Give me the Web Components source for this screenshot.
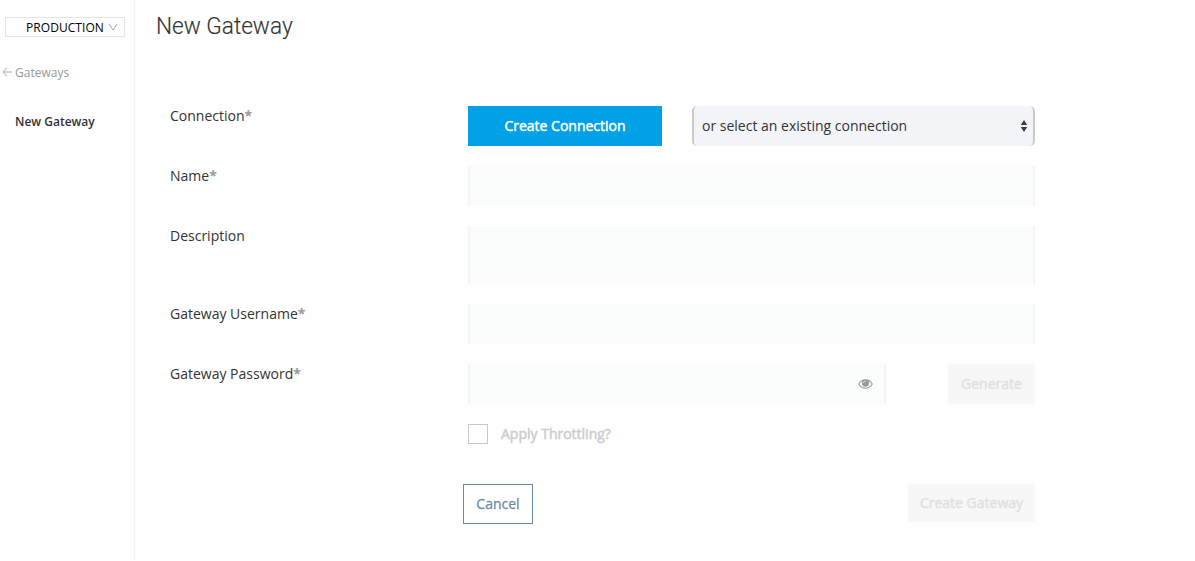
<!DOCTYPE html>
<html lang="en">
<head>
<meta charset="utf-8">
<title>New Gateway</title>
<style>
html,body{margin:0;height:100%;background:#fefefe;overflow:hidden}
body{font:14px/20px "Open Sans","Noto Sans",sans-serif;color:#333}
</style>
</head>
<body>
<gateway-app></gateway-app>
<script>
const define = (name, html) => customElements.define(name, class extends HTMLElement {
  constructor() {
    super();
    const t = document.createElement('template');
    t.innerHTML = html;
    this.attachShadow({mode: 'open'}).appendChild(t.content.cloneNode(true));
  }
});

define('env-picker', `
<style>
:host{display:flex;box-sizing:border-box;height:20px;width:120px;margin:17px 0 0 5px;border:1px solid #e4e4e4;padding-left:20px;align-items:center;color:#000;font-size:12px;line-height:18px}
span{width:79px;white-space:nowrap;letter-spacing:.06px;position:relative;top:1px}
svg{display:block;margin-left:3px}
</style>
<span><slot></slot></span>
<svg width="10" height="8" viewBox="0 0 10 8" fill="none" stroke="#a3a3a3"><path d="M.8.8 5 7 9.2.8"/></svg>`);

define('back-link', `
<style>
:host{display:flex;height:18px;margin:27px 0 0 2px;font-size:12px;line-height:18px;color:#999}
svg{display:block;margin:3px 3px 0 0}
</style>
<svg width="10" height="10" viewBox="0 0 10 10" fill="none" stroke="#c9c9c9" stroke-width="1.3"><path d="M10 5H1M4.8 1 1 5l3.8 4"/></svg>
<slot></slot>`);

define('side-nav', `
<style>
:host{display:flex;flex-direction:column;box-sizing:border-box;width:135px;height:560px;flex:none;border-right:1px solid #f1f1f1}
b{font-size:12px;font-weight:600;line-height:18px;margin:31px 0 0 15px;white-space:nowrap}
</style>
<env-picker>PRODUCTION</env-picker>
<back-link>Gateways</back-link>
<b>New Gateway</b>`);

define('form-row', `
<style>
:host{display:flex;align-items:flex-start;margin-bottom:20px;width:865px}
label{width:298px;flex:none;white-space:nowrap}
i{display:none;font-style:normal;font-weight:700;color:#999}
:host([required]) i{display:inline}
div{display:flex;flex:1;justify-content:space-between}
</style>
<label><slot name="label"></slot><i>*</i></label><div><slot></slot></div>`);

define('text-field', `
<style>
:host{display:flex;box-sizing:border-box;width:567px;height:40px;border:solid #f3f4f4;border-width:0 2px;background:#fbfdfc;align-items:center;justify-content:flex-end}
:host([tall]){height:58px}
:host([short]){width:418px;padding-right:11px}
</style><slot></slot>`);

define('eye-icon', `
<style>:host{display:block}svg{display:block}</style>
<svg width="15" height="10" viewBox="0 0 15 10"><path d="M.7 5C4-.6 11-.6 14.3 5 11 10.6 4 10.6.7 5Z" fill="none" stroke="#999" stroke-width="1.1"/><circle cx="7.5" cy="4.2" r="3.6" fill="#999"/><path d="M5.4 4.2Q5.5 2.1 7.6 2" fill="none" stroke="#eee" stroke-width=".8"/></svg>`);

define('push-button', `
<style>
:host{display:flex;box-sizing:border-box;height:40px;align-items:center;justify-content:center;-webkit-text-stroke:.45px currentColor;white-space:nowrap}
:host([kind=primary]){width:194px;background:#00a1e7;color:#fff}
:host([kind=generate]){width:87px;background:#f7f7f7;color:#dfe1e1}
:host([kind=submit]){width:127px;height:38px;background:#f7f7f7;color:#dfe1e1}
:host([kind=outline]){width:70px;border:1px solid #6a8a9d;color:#6f8da0;-webkit-text-stroke-width:.3px}
</style><span><slot></slot></span>`);

define('select-box', `
<style>
:host{display:flex;box-sizing:border-box;width:343px;height:40px;border:solid #c8cacb;border-width:0 2px;border-radius:5px;background:#f3f4f7;align-items:center;justify-content:space-between;padding:0 5px 0 8px}
svg{display:block}
</style><span><slot></slot></span>
<svg width="8" height="12" viewBox="0 0 8 12" fill="#393b3f"><path d="M4 0 7.2 5H.8ZM4 12 .8 7h6.4Z"/></svg>`);

define('check-option', `
<style>
:host{display:flex;align-items:center;height:20px;margin-left:298px;color:#ccc}
i{box-sizing:border-box;width:20px;height:20px;border:1px solid #c8c8c8;margin-right:13px}
span{-webkit-text-stroke:.45px currentColor}
</style><i></i><span><slot></slot></span>`);

define('gateway-form', `
<style>
:host{display:block;padding:10px 0 0 21px}
h1{font:300 24px/32px Roboto,"Open Sans",sans-serif;margin:0;color:#333;width:max-content;transform:scaleX(.942);transform-origin:0 0;-webkit-text-stroke:.15px currentColor}
section{padding:64px 0 0 14px}
footer{display:flex;justify-content:space-between;width:572px;margin:40px 0 0 293px}
</style>
<h1>New Gateway</h1>
<section>
<form-row required><span slot="label">Connection</span><push-button kind="primary">Create Connection</push-button><select-box>or select an existing connection</select-box></form-row>
<form-row required><span slot="label">Name</span><text-field></text-field></form-row>
<form-row><span slot="label">Description</span><text-field tall></text-field></form-row>
<form-row required><span slot="label">Gateway Username</span><text-field></text-field></form-row>
<form-row required><span slot="label">Gateway Password</span><text-field short><eye-icon></eye-icon></text-field><push-button kind="generate">Generate</push-button></form-row>
<check-option>Apply Throttling?</check-option>
<footer><push-button kind="outline">Cancel</push-button><push-button kind="submit">Create Gateway</push-button></footer>
</section>`);

define('gateway-app', `
<style>:host{display:flex}</style>
<side-nav></side-nav><gateway-form></gateway-form>`);
</script>
</body>
</html>
